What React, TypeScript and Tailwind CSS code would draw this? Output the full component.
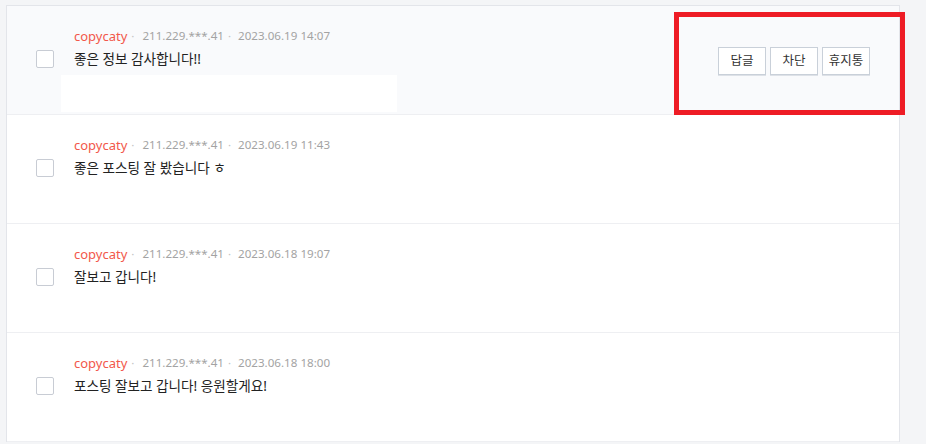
import React from "react";

interface Comment {
  id: number;
  name: string;
  ip: string;
  date: string;
  text: string;
}

const comments: Comment[] = [
  { id: 1, name: "copycaty", ip: "211.229.***.41", date: "2023.06.19 14:07", text: "좋은 정보 감사합니다!!" },
  { id: 2, name: "copycaty", ip: "211.229.***.41", date: "2023.06.19 11:43", text: "좋은 포스팅 잘 봤습니다 ㅎ" },
  { id: 3, name: "copycaty", ip: "211.229.***.41", date: "2023.06.18 19:07", text: "잘보고 갑니다!" },
  { id: 4, name: "copycaty", ip: "211.229.***.41", date: "2023.06.18 18:00", text: "포스팅 잘보고 갑니다! 응원할게요!" },
];

const font = { fontFamily: '"Noto Sans", "Noto Sans CJK KR", sans-serif' };

const ActionButton = ({ label }: { label: string }) => (
  <button className="w-[48px] h-[28px] bg-white border border-[#c9d0d9] text-[12.5px] text-[#333] shadow-[0_1px_0_#dde1e7]">
    {label}
  </button>
);

export default function App() {
  return (
    <div className="relative w-[926px] h-[444px] overflow-hidden bg-[#f4f5f7]" style={font}>
      <div className="ml-[6px] mt-[5px] w-[894px] bg-white border-l border-r border-t border-[#e3e5ea]">
        {comments.map((c, i) => (
          <div
            key={c.id}
            className={`flex h-[109px] border-b border-[#eeeff2] ${i === 0 ? "bg-[#f9fafc]" : "bg-white"}`}
          >
            <div className="w-[67px] pl-[29px] pt-[44px]">
              <div className="w-[18px] h-[18px] bg-white border border-[#c8ccd4] rounded-[2px]" />
            </div>
            <div className="flex-1 pt-[21px]">
              <div className="flex items-center h-[18px] leading-[18px] text-[11.6px]">
                <span className="text-[13px] text-[#f2584b]">{c.name}</span>
                <span className="ml-[4px] mr-[8px] text-[#c4c4c4]">·</span>
                <span className="text-[#a3a3a3]">{c.ip}</span>
                <span className="ml-[4px] mr-[7px] text-[#c4c4c4]">·</span>
                <span className="text-[#a3a3a3]">{c.date}</span>
              </div>
              <p className="mt-[4px] h-[20px] leading-[20px] text-[13.6px] text-[#222]">{c.text}</p>
              {i === 0 && <div className="ml-[-13px] mt-[6px] w-[336px] h-[37px] bg-white" />}
            </div>
            {i === 0 && (
              <div className="flex items-center gap-[4px] pr-[29px] pt-[2px]">
                <ActionButton label="답글" />
                <ActionButton label="차단" />
                <ActionButton label="휴지통" />
              </div>
            )}
          </div>
        ))}
      </div>
      {/* highlight box */}
      <div className="absolute left-[674px] top-[12px] w-[231px] h-[103px] border-[5px] border-[#ee1c25] pointer-events-none" />
    </div>
  );
}
